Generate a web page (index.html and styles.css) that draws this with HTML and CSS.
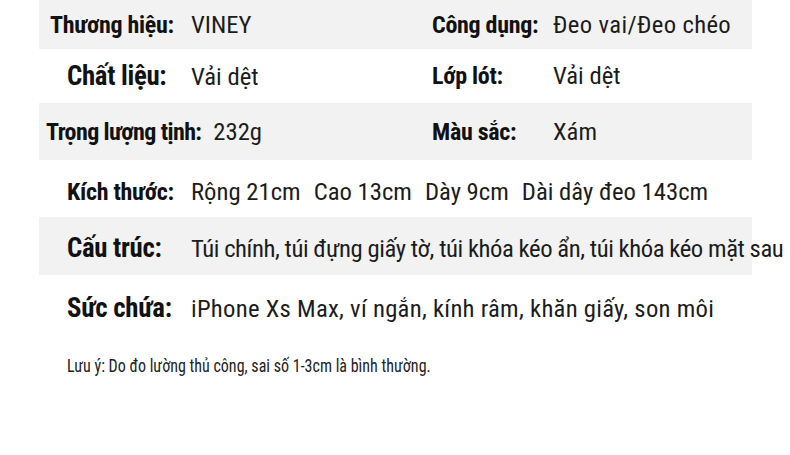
FILE: index.html
```html
<!DOCTYPE html>
<html lang="vi">
<head>
<meta charset="utf-8">
<link rel="stylesheet" href="styles.css">
</head>
<body>
<div class="specs">
  <div class="row row--gray row--h1">
    <div class="cell cell--left pair--brand">
      <span class="label">Thương hiệu:</span><span class="value">VINEY</span>
    </div>
    <div class="cell cell--right">
      <span class="label">Công dụng:</span><span class="value value--use">Đeo vai/Đeo chéo</span>
    </div>
  </div>
  <div class="row row--h2">
    <div class="cell cell--left">
      <span class="label label--lg">Chất liệu:</span><span class="value">Vải dệt</span>
    </div>
    <div class="cell cell--right">
      <span class="label">Lớp lót:</span><span class="value">Vải dệt</span>
    </div>
  </div>
  <div class="row row--gray row--h3">
    <div class="cell cell--left pair--weight">
      <span class="label">Trọng lượng tịnh:</span><span class="value">232g</span>
    </div>
    <div class="cell cell--right">
      <span class="label">Màu sắc:</span><span class="value">Xám</span>
    </div>
  </div>
  <div class="row row--h4">
    <div class="cell cell--full">
      <span class="label">Kích thước:</span><span class="value"><span class="word">Rộng 21cm</span><span class="word">Cao 13cm</span><span class="word">Dày 9cm</span><span class="word">Dài dây đeo 143cm</span></span>
    </div>
  </div>
  <div class="row row--gray row--h5">
    <div class="cell cell--full">
      <span class="label label--lg">Cấu trúc:</span><span class="value value--tight">Túi chính, túi đựng giấy tờ, túi khóa kéo ẩn, túi khóa kéo mặt sau</span>
    </div>
  </div>
  <div class="row row--h6">
    <div class="cell cell--full">
      <span class="label label--lg">Sức chứa:</span><span class="value value--loose">iPhone Xs Max, ví ngắn, kính râm, khăn giấy, son môi</span>
    </div>
  </div>
  <p class="note">Lưu ý: Do đo lường thủ công, sai số 1-3cm là bình thường.</p>
</div>
</body>
</html>
```
FILE: styles.css
```css
html, body {
  margin: 0;
  padding: 0;
  background: #ffffff;
  overflow: hidden;
}
body {
  width: 790px;
  height: 455px;
  font-family: "Roboto Condensed", Roboto, "Liberation Sans", sans-serif;
  color: #1a1a1a;
}
.specs {
  padding-left: 39px;
}
.row {
  display: flex;
  align-items: center;
  width: 713px;
  white-space: nowrap;
}
.row--gray { background: #f2f2f2; }
.row--h1 { height: 49px; }
.row--h2 { height: 54px; }
.row--h3 { height: 57px; }
.row--h4 { height: 57px; padding-top: 6px; box-sizing: border-box; }
.row--h5 { height: 58px; padding-top: 4px; box-sizing: border-box; }
.row--h6 { height: 60px; padding-top: 6px; box-sizing: border-box; }
.cell {
  display: flex;
  align-items: baseline;
  line-height: 30px;
}
.cell--left { width: 393px; }
.label {
  font-size: 24px;
  letter-spacing: -0.3px;
  font-weight: 700;
  color: #111;
  box-sizing: border-box;
  width: 152px;
  padding-left: 28px;
  flex: none;
}
.label--lg { font-size: 26.8px; }
.value {
  font-size: 24.7px;
  font-weight: 400;
  color: #1c1c1c;
}
.value--use { letter-spacing: 0.35px; }
.value--tight { letter-spacing: -0.45px; }
.value--loose { letter-spacing: 0.26px; }
.word + .word { margin-left: 13px; }
.pair--brand .label { padding-left: 11px; }
.pair--weight .label { width: auto; padding-left: 7px; margin-right: 12px; letter-spacing: -0.6px; }
.cell--right .label { width: 121px; padding-left: 0; }
.note {
  margin: 20px 0 0 28px;
  font-size: 18px;
  color: #222;
  display: inline-block;
  transform: scaleX(0.89);
  transform-origin: left center;
  white-space: nowrap;
}
```
